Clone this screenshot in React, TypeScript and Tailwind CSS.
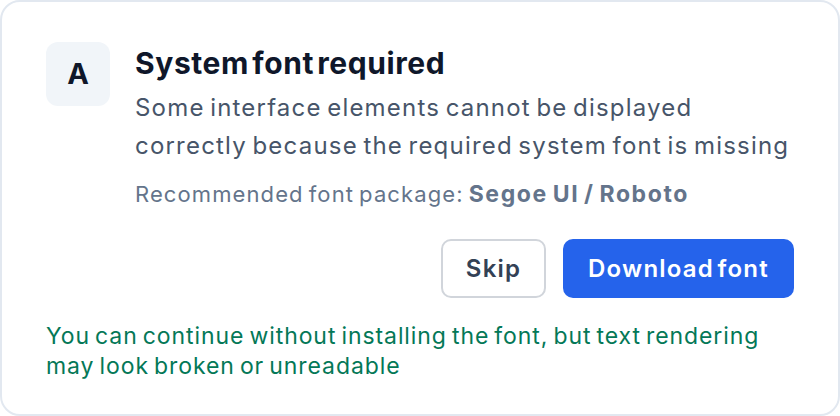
export default function App() {
  return (
    <div className="w-[840px] h-[416px] bg-white" style={{ fontFamily: "Inter, 'Noto Sans', sans-serif" }}>
      <div className="h-full rounded-[20px] border-2 border-[#e2e8f0] bg-white px-[44px] pt-[40px]">
        <div className="flex gap-[25px]">
          <div className="w-16 h-16 shrink-0 rounded-xl bg-[#f1f5f9] flex items-center justify-center text-[29px] font-bold text-[#0f172a]">
            A
          </div>
          <div className="flex-1">
            <h1 className="text-[30px] leading-[42px] font-bold text-[#0f172a] tracking-[0.02em] [word-spacing:-0.15em]">
              System font required
            </h1>
            <p className="mt-[5px] text-[24px] leading-[38px] text-[#475569] tracking-[0.05em] [word-spacing:-0.1em]">
              Some interface elements cannot be displayed correctly because the required system font is missing
            </p>
            <p className="mt-[14px] text-[22px] leading-[30px] text-[#64748b] tracking-[0.05em] [word-spacing:-0.1em]">
              Recommended font package: <span className="font-bold text-[23px] tracking-[0.07em]">Segoe UI / Roboto</span>
            </p>
          </div>
        </div>
        <div className="mt-[30px] flex justify-end gap-[17px]">
          <button className="w-[105px] h-[59px] rounded-[10px] border-2 border-[#d1d5db] text-[24px] font-semibold text-[#334155] tracking-[0.05em]">
            Skip
          </button>
          <button className="w-[231px] h-[59px] rounded-[10px] bg-[#2563eb] text-[24px] font-semibold text-white tracking-[0.05em] [word-spacing:-0.15em]">
            Download font
          </button>
        </div>
        <p className="mt-[23px] text-[23px] leading-[30px] text-[#047857] tracking-[0.04em] [word-spacing:-0.1em]">
          You can continue without installing the font, but text rendering may look broken or unreadable
        </p>
      </div>
    </div>
  );
}
